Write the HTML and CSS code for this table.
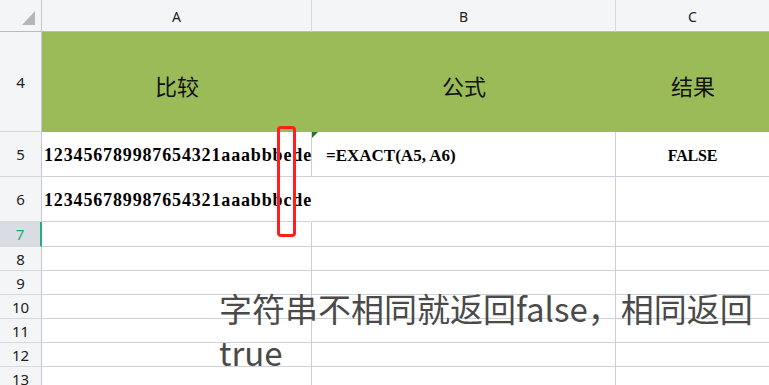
FILE: index.html
```html
<!DOCTYPE html>
<html lang="zh">
<head>
<meta charset="utf-8">
<title>EXACT</title>
<link rel="stylesheet" href="styles.css">
</head>
<body>
<div class="sheet">
  <div class="grid">
    <div class="corner"><span class="corner-tri"></span></div>
    <div class="colhead">A</div>
    <div class="colhead">B</div>
    <div class="colhead last">C</div>

    <div class="rowhead r4">4</div>
    <div class="cell title r4">比较</div>
    <div class="cell title r4">公式</div>
    <div class="cell title r4 last">结果</div>

    <div class="rowhead r5">5</div>
    <div class="cell data r5">123456789987654321aaabbbede</div>
    <div class="cell formula r5"><span class="err-tri"></span>=EXACT(A5, A6)</div>
    <div class="cell result r5 last">FALSE</div>

    <div class="rowhead r6">6</div>
    <div class="cell data r6 overflow">123456789987654321aaabbbcde</div>
    <div class="cell r6"></div>
    <div class="cell r6 last"></div>

    <div class="rowhead r7 active">7</div>
    <div class="cell r7"></div>
    <div class="cell r7"></div>
    <div class="cell r7 last"></div>

    <div class="rowhead rs">8</div>
    <div class="cell rs"></div>
    <div class="cell rs"></div>
    <div class="cell rs last"></div>

    <div class="rowhead rs">9</div>
    <div class="cell rs"></div>
    <div class="cell rs"></div>
    <div class="cell rs last"></div>

    <div class="rowhead rs">10</div>
    <div class="cell rs"></div>
    <div class="cell rs"></div>
    <div class="cell rs last"></div>

    <div class="rowhead rs">11</div>
    <div class="cell rs"></div>
    <div class="cell rs"></div>
    <div class="cell rs last"></div>

    <div class="rowhead rs">12</div>
    <div class="cell rs"></div>
    <div class="cell rs"></div>
    <div class="cell rs last"></div>

    <div class="rowhead rs">13</div>
    <div class="cell rs"></div>
    <div class="cell rs"></div>
    <div class="cell rs last"></div>
  </div>

  <div class="highlight"></div>
  <div class="note">字符串不相同就返回false，相同返回<br>true</div>
</div>
</body>
</html>
```

FILE: styles.css
```css
* { box-sizing: border-box; }

html, body {
  margin: 0;
  padding: 0;
  background: #ffffff;
  overflow: hidden;
}

.sheet {
  position: relative;
  width: 769px;
  height: 385px;
  overflow: hidden;
}

.grid {
  display: grid;
  grid-template-columns: 42px 270px 304px 154px;
  grid-template-rows: 32px 100px 45px 45px 25px 24px 24px 24px 24px 24px 24px;
}

.corner {
  background: #f4f5f7;
  border-right: 1px solid #c3c8d2;
  border-bottom: 1px solid #b4bbc9;
  position: relative;
}

.corner-tri {
  position: absolute;
  left: 22px;
  top: 11px;
  width: 0;
  height: 0;
  border-left: 13px solid transparent;
  border-bottom: 14px solid #b6b6b6;
}

.colhead {
  background: #f4f5f7;
  border-right: 1px solid #d6d9df;
  border-bottom: 1px solid #b4bbc9;
  display: flex;
  align-items: center;
  justify-content: center;
  font-family: "Noto Sans", "Liberation Sans", sans-serif;
  font-size: 14px;
  color: #222;
  padding-top: 1px;
}

.rowhead {
  background: #f4f5f7;
  border-right: 1px solid #c3c8d2;
  border-bottom: 1px solid #d3d7de;
  display: flex;
  align-items: center;
  justify-content: center;
  font-family: "Noto Sans", "Liberation Sans", sans-serif;
  font-size: 15px;
  color: #222;
}

.rowhead.active {
  background: #d9dce2;
  color: #21a86e;
  border-right: 2px solid #21b07a;
}

.cell {
  border-right: 1px solid #cdd1da;
  border-bottom: 1px solid #cdd1da;
  position: relative;
  display: flex;
  align-items: center;
  white-space: nowrap;
}

.cell.last { border-right-color: transparent; }

.cell.title {
  background: #9bbb59;
  border-right: none;
  border-bottom: none;
  justify-content: center;
  font-family: "Noto Sans CJK SC", sans-serif;
  font-size: 22px;
  color: #111;
  padding-top: 6px;
}

.cell.data {
  font-family: "Liberation Serif", serif;
  font-weight: bold;
  font-size: 18px;
  letter-spacing: 0.85px;
  color: #000;
  padding-left: 2px;
  padding-top: 3px;
}

.cell.overflow { border-right-color: transparent; }

.cell.formula {
  font-family: "Liberation Serif", serif;
  font-weight: bold;
  font-size: 17px;
  letter-spacing: 0;
  color: #000;
  padding-left: 14px;
  padding-top: 3px;
}

.cell.result {
  justify-content: center;
  font-family: "Liberation Serif", serif;
  font-weight: bold;
  font-size: 16px;
  letter-spacing: -0.2px;
  color: #000;
  padding-top: 3px;
}

.err-tri {
  position: absolute;
  left: 0;
  top: 0;
  width: 0;
  height: 0;
  border-top: 6px solid #1f7a1f;
  border-right: 6px solid transparent;
}

.highlight {
  position: absolute;
  left: 277px;
  top: 126px;
  width: 19px;
  height: 111px;
  border: 3px solid #ff1f1f;
  border-radius: 4px;
}

.note {
  position: absolute;
  left: 219px;
  top: 286px;
  font-family: "Noto Sans CJK SC", "Noto Sans", sans-serif;
  font-size: 33px;
  line-height: 44px;
  color: #4a4a4a;
  white-space: nowrap;
}
```
